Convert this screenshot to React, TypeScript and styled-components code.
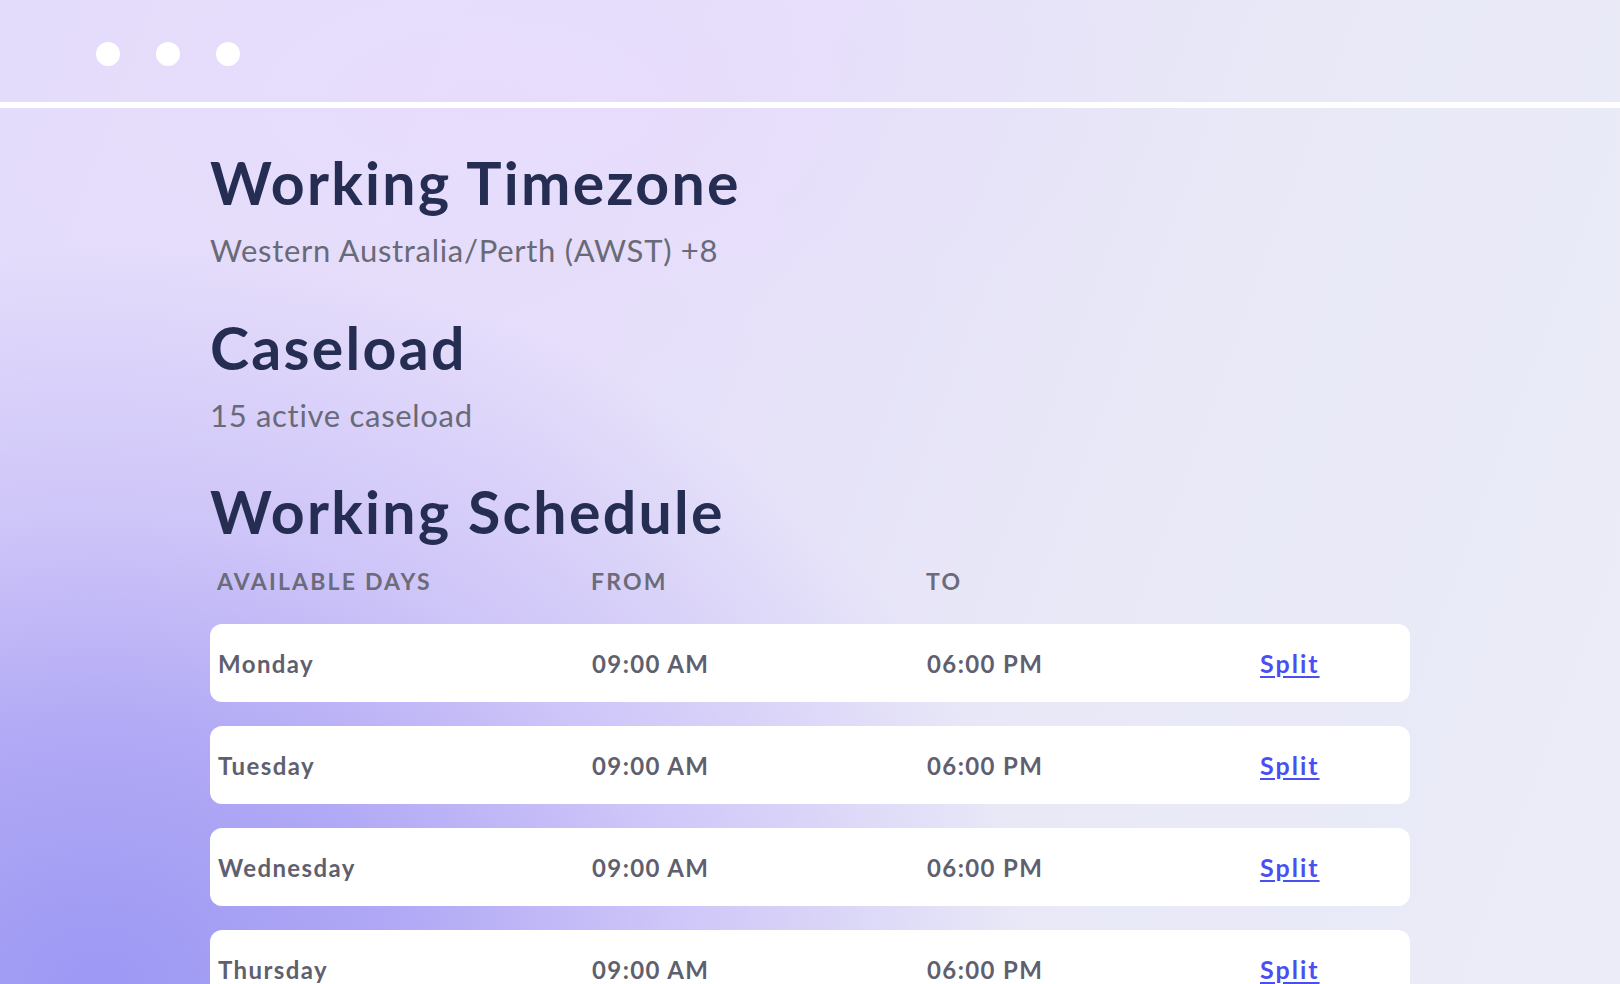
import React from 'react';
import styled, { createGlobalStyle } from 'styled-components';

const GlobalStyle = createGlobalStyle`
  html, body {
    margin: 0;
    padding: 0;
  }
  body {
    font-family: Lato, "Noto Sans", sans-serif;
  }
`;

const Page = styled.div`
  height: 984px;
  overflow: hidden;
  background:
    radial-gradient(ellipse 65% 85% at 6% 100%, #9c98f4 0%, #b1a9f5 30%, rgba(198, 188, 248, 0.75) 55%, rgba(220, 214, 250, 0) 88%),
    radial-gradient(ellipse 40% 30% at 30% 10%, rgba(232, 220, 252, 0.9) 0%, rgba(232, 220, 252, 0) 100%),
    linear-gradient(110deg, #e3dcfb 0%, #e5defa 35%, #e8e8f7 65%, #ebecf7 100%);
`;

const TopBar = styled.div`
  height: 96px;
  padding-top: 6px;
  border-bottom: 6px solid #ffffff;
  display: flex;
  align-items: center;
  gap: 36px;
  padding-left: 96px;
`;

const Dot = styled.span`
  width: 24px;
  height: 24px;
  border-radius: 50%;
  background: #ffffff;
`;

const Content = styled.main`
  width: 1200px;
  padding-left: 210px;
`;

const Title = styled.h1<{ $gap: number }>`
  margin: ${(p) => p.$gap}px 0 0;
  font-size: 59px;
  line-height: 1;
  font-weight: 700;
  color: #252e52;
  letter-spacing: 2.3px;
`;

const Subtitle = styled.p`
  margin: 23px 0 0;
  font-size: 31px;
  line-height: 1;
  font-weight: 400;
  color: #696a78;
  letter-spacing: 0.7px;
`;

const HeaderRow = styled.div`
  margin-top: 29px;
  display: grid;
  grid-template-columns: 374px 335px 333px 1fr;
  padding-left: 7px;
`;

const HeaderCell = styled.span`
  font-size: 23px;
  line-height: 1;
  font-weight: 700;
  letter-spacing: 2.2px;
  color: #6b6b79;
  text-transform: uppercase;
`;

const Rows = styled.div`
  margin-top: 31px;
  display: flex;
  flex-direction: column;
  gap: 24px;
`;

const Row = styled.div`
  height: 78px;
  background: #ffffff;
  border-radius: 12px;
  display: grid;
  grid-template-columns: 374px 335px 333px 1fr;
  align-items: center;
  padding-left: 8px;
`;

const Cell = styled.span`
  font-size: 24px;
  font-weight: 700;
  color: #5f606f;
  letter-spacing: 1.4px;
`;

const SplitLink = styled.a`
  font-size: 25px;
  font-weight: 700;
  color: #4a4ff2;
  letter-spacing: 2px;
  text-decoration: underline;
  text-underline-offset: 3px;
  cursor: pointer;
`;

const days = ['Monday', 'Tuesday', 'Wednesday', 'Thursday'];

const App: React.FC = () => {
  return (
    <Page>
      <GlobalStyle />
      <TopBar>
        <Dot />
        <Dot />
        <Dot />
      </TopBar>
      <Content>
        <Title $gap={45}>Working Timezone</Title>
        <Subtitle>Western Australia/Perth (AWST) +8</Subtitle>
        <Title $gap={52}>Caseload</Title>
        <Subtitle>15 active caseload</Subtitle>
        <Title $gap={51}>Working Schedule</Title>
        <HeaderRow>
          <HeaderCell>Available Days</HeaderCell>
          <HeaderCell>From</HeaderCell>
          <HeaderCell>To</HeaderCell>
        </HeaderRow>
        <Rows>
          {days.map((day) => (
            <Row key={day}>
              <Cell>{day}</Cell>
              <Cell>09:00 AM</Cell>
              <Cell>06:00 PM</Cell>
              <SplitLink>Split</SplitLink>
            </Row>
          ))}
        </Rows>
      </Content>
    </Page>
  );
};

export default App;
